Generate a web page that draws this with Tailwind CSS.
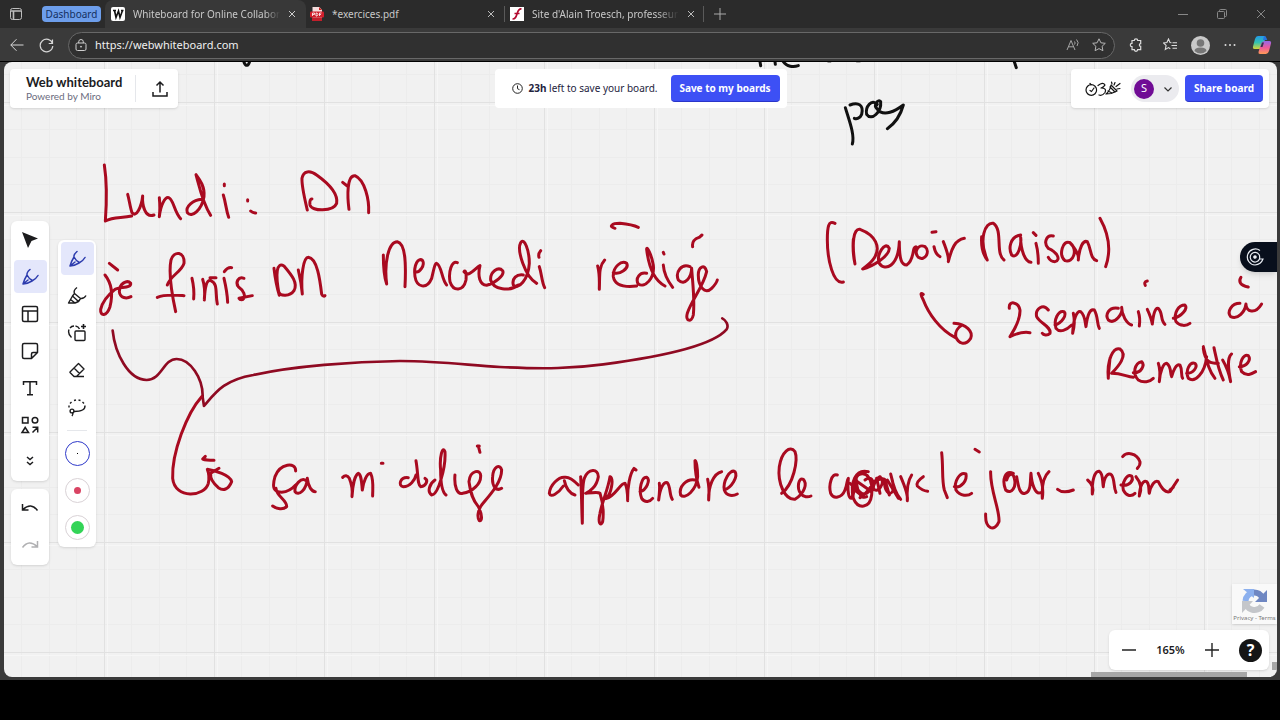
<!DOCTYPE html>
<html lang="en">
<head>
    <meta charset="UTF-8">
    <meta name="viewport" content="width=device-width, initial-scale=1.0">
    <title>Whiteboard for Online Collaboration</title>
    <script src="https://cdn.jsdelivr.net/npm/@tailwindcss/browser@4"></script>
</head>
<body class="flex h-screen flex-col overflow-hidden bg-black font-['Noto_Sans',sans-serif] text-[#1c1c1e]">
    <!-- Tab strip -->
    <header class="flex h-7 shrink-0 items-center bg-[#2b2b2b] text-[10px] text-[#c8c8c8]">
        <button aria-label="Tab actions" class="ml-2.5 flex h-7 w-3 items-center">
            <svg class="h-3 w-3" viewBox="0 0 12 12" fill="none" stroke="#bdbdbd"><rect x=".5" y=".5" width="11" height="11" rx="2"/><path d="M1 3h10M3.5 3v8" stroke-width="1.6"/></svg>
        </button>
        <button class="ml-5 h-4 w-[59px] rounded bg-[#6d9eeb] text-[10px] leading-4 text-[#14305f]">Dashboard</button>
        <div class="ml-1 flex h-7 w-[201px] items-center rounded-t-lg bg-[#383838] pl-1.5">
            <svg class="h-3.5 w-3.5 shrink-0" viewBox="0 0 14 14"><rect width="14" height="14" rx="2" fill="#fff"/><path d="M2 3.500h3M3.500 3.500L5 10.500 7.500 4 9 10.500 11.500 3.500M10 3.500h2.500" fill="none" stroke="#111" stroke-width="1.600"/></svg>
            <a href="#" class="ml-2 w-[147px] overflow-hidden whitespace-nowrap mask-r-from-90%">Whiteboard for Online Collabora</a>
            <button aria-label="Close tab" class="ml-2"><svg class="h-2 w-2" viewBox="0 0 8 8" stroke="#ccc"><path d="M1 1l6 6M7 1L1 7"/></svg></button>
        </div>
        <div class="flex h-7 w-[198px] items-center pl-1">
            <svg class="h-3.5 w-3.5 shrink-0" viewBox="0 0 14 14"><path d="M2.500 0h7L12 3v10.500H2.500z" fill="#f4dcdc"/><path d="M9 0l3 3H9z" fill="#c22"/><rect y="4.500" width="14" height="6" rx="1" fill="#d11f2c"/><path d="M2.500 9V6h2v1.500h-2M6 6v3h1l1-1.500L7 6zM9.500 9V6h2M9.500 7.500H11" fill="none" stroke="#fff" stroke-width=".8"/><path d="M2 10.500h10V14H2z" fill="#c11f2b"/></svg>
            <a href="#" class="ml-2 w-[147px] whitespace-nowrap">*exercices.pdf</a>
            <button aria-label="Close tab" class="ml-2"><svg class="h-2 w-2" viewBox="0 0 8 8" stroke="#bbb"><path d="M1 1l6 6M7 1L1 7"/></svg></button>
        </div>
        <div class="flex h-4 w-[200px] items-center border-x border-[#5a5a5a] pl-[5px]">
            <svg class="h-3.5 w-3.5 shrink-0" viewBox="0 0 14 14"><path fill="#fff" d="M0 0h14v14H0z"/><path d="M11.500 2C8.500 1.500 8 4 7 7s-1.500 5-4.500 5M4.500 6.500h5" fill="none" stroke="#b3092f" stroke-width="1.700"/></svg>
            <a href="#" class="ml-2 w-[147px] overflow-hidden whitespace-nowrap mask-r-from-85%">Site d'Alain Troesch, professeur de</a>
            <button aria-label="Close tab" class="ml-2"><svg class="h-2 w-2" viewBox="0 0 8 8" stroke="#bbb"><path d="M1 1l6 6M7 1L1 7"/></svg></button>
        </div>
        <button aria-label="New tab" class="ml-2.5"><svg class="h-3 w-3" viewBox="0 0 12 12" stroke="#aaa"><path d="M6 0v12M0 6h12"/></svg></button>
        <div class="ml-auto flex items-center gap-[29px] pr-3.5">
            <button aria-label="Minimize"><svg class="h-2.5 w-2.5" viewBox="0 0 10 10" stroke="#888"><path d="M0 5.500h10"/></svg></button>
            <button aria-label="Restore"><svg class="h-2.5 w-2.5" viewBox="0 0 10 10" fill="none" stroke="#888"><rect x=".5" y="2.500" width="7" height="7" rx="1"/><path d="M2.500 2.500V1.500a1 1 0 011-1h5a1 1 0 011 1v5a1 1 0 01-1 1h-1"/></svg></button>
            <button aria-label="Close"><svg class="h-2.5 w-2.5" viewBox="0 0 10 10" stroke="#888"><path d="M1 1l8 8M9 1L1 9"/></svg></button>
        </div>
    </header>

    <!-- Address bar -->
    <nav class="flex h-[34px] shrink-0 items-center border-b border-black bg-[#3a3a3a] pt-px">
        <button aria-label="Back" class="ml-2.5"><svg class="h-3.5 w-3.5" viewBox="0 0 14 14" fill="none" stroke="#d6d6d6"><path d="M13.500 7H.8M6.500 1.200L.8 7l5.700 5.800"/></svg></button>
        <button aria-label="Refresh" class="ml-[15px]"><svg class="h-[15px] w-[15px]" viewBox="0 0 15 15" fill="none" stroke="#d6d6d6" stroke-width="1.200"><path d="M13.500 5.500A6.300 6.300 0 1013.800 8M13.500 1.500v4H9.700"/></svg></button>
        <div class="ml-3.5 flex h-[27px] flex-1 items-center rounded-full border border-[#686868] bg-[#303030] pr-2 pl-1.5">
            <svg class="h-3 w-3" viewBox="0 0 12 12" fill="none" stroke="#cfcfcf"><rect x="1" y="4" width="10" height="7.500" rx="1.500"/><path d="M3.700 4V2.800a2.300 2.300 0 014.600 0V4"/><circle cx="6" cy="7.700" r=".5" fill="#cfcfcf"/></svg>
            <input aria-label="Address" value="https://webwhiteboard.com" class="ml-2 min-w-0 flex-1 bg-transparent text-[11px] text-[#efefef] outline-none">
            <button aria-label="Read aloud"><svg class="h-3.5 w-3.5" viewBox="0 0 14 14" fill="none" stroke="#a5a5a5"><path d="M1 12L5 2.500 9 12M2.500 8.800h5M8.500 3.500q1.300 1.500 0 3M10.500 1.500q3 3 .5 6.500"/></svg></button>
            <button aria-label="Add to favorites" class="ml-3"><svg class="h-3.5 w-3.5" viewBox="0 0 14 14" fill="none" stroke="#b5b5b5"><path d="M7 .8l1.900 4 4.400.5-3.200 3 .8 4.400L7 10.600l-3.900 2.100.8-4.400-3.200-3 4.400-.5z" stroke-linejoin="round"/></svg></button>
        </div>
        <div class="mr-2 ml-3.5 flex items-center">
            <button aria-label="Extensions"><svg class="h-3.5 w-3.5" viewBox="0 0 14 14" fill="none" stroke="#ddd" stroke-width="1.200"><path d="M3 2.500h2.300a1.700 1.700 0 013.400 0h3v3.200a1.300 1.300 0 000 2.700v3.200H8.700a1.700 1.700 0 01-3.400 0H3V8.700a1.700 1.700 0 010-3.400z"/></svg></button>
            <button aria-label="Favorites" class="ml-5"><svg class="h-3.5 w-3.5" viewBox="0 0 14 14" fill="none" stroke="#ddd" stroke-width="1.100"><path d="M8.500 4.700L7 4.500 5.500 1 3.900 4.500.6 5l2.500 2.400-.8 4L5.500 9.600l1.800 1.200M9.500 4.700H14M8.500 7.500H14M9.500 10.300H14"/></svg></button>
            <button aria-label="Profile" class="ml-3.5"><svg class="h-[19px] w-[19px]" viewBox="0 0 19 19"><circle cx="9.500" cy="9.500" r="9.500" fill="#c9c9c9"/><circle cx="9.500" cy="7" r="3.800" fill="#777"/><path d="M3.500 15q0-3.500 6-3.500t6 3.500q-6 5-12 0" fill="#777"/></svg></button>
            <button aria-label="Settings and more" class="ml-3.5"><svg class="h-3 w-3" viewBox="0 0 12 12" fill="#ddd"><circle cx="1.500" cy="6" r="1"/><circle cx="6" cy="6" r="1"/><circle cx="10.500" cy="6" r="1"/></svg></button>
            <button aria-label="Copilot" class="ml-4"><svg class="h-5 w-5" viewBox="0 0 20 20"><defs><linearGradient id="ca" x1="0" y1="0" x2="0" y2="1"><stop stop-color="#2499e8"/><stop offset=".5" stop-color="#33c1b0"/><stop offset="1" stop-color="#d5d53a"/></linearGradient><linearGradient id="cb" x1="0" y1="0" x2="0" y2="1"><stop stop-color="#9568e8"/><stop offset=".5" stop-color="#ed5a9c"/><stop offset="1" stop-color="#ff9a55"/></linearGradient></defs><path d="M6 1h6q2 0 1.500 2L11 11q-1 3-4 3H2.500Q.5 14 1 11.500L3 4q.8-3 3-3" fill="url(#ca)"/><path d="M12 1q2 0 2.500 2l.7 2H11z" fill="#2672df"/><path d="M14 19H8q-2 0-1.500-2L9 9q1-3 4-3h4.500q2 0 1.500 2.500L17 16q-.8 3-3 3" fill="url(#cb)"/><path d="M10 7.500h2L10.500 12h-2z" fill="#38324c"/></svg></button>
        </div>
    </nav>

    <!-- Board -->
    <div class="flex min-h-0 flex-1 bg-[#3a3a3a] pr-[3px] pb-[3px] pl-1">
        <main class="relative flex-1 overflow-hidden rounded-lg bg-[#f1f1f1]">
            <svg class="absolute inset-0 h-full w-full" role="img" aria-label="Handwritten notes: Lundi : DM, je finis DM Mercredi rédigé (Devoir Maison), 2 semaines à remettre, ça m'oblige à apprendre le cours le jour-même">
                <defs>
                    <pattern id="grid" x="100" y="40" width="110" height="110" patternUnits="userSpaceOnUse">
                        <path d="M27.500 0v110M55.500 0v110M82.500 0v110M0 27.500h110M0 55.500h110M0 82.500h110" stroke="#ececec"/>
                        <path d="M3.500 0v110M0 3.500h110" stroke="#f6f6f6"/>
                        <path d="M.5 0v110M0 .5h110" stroke="#e1e1e1"/>
                    </pattern>
                </defs>
                <rect width="100%" height="100%" fill="url(#grid)"/>

                <g transform="translate(-4 -62)" fill="none" stroke-linecap="round" stroke-linejoin="round">
                    <!-- black ink -->
                    <g transform="translate(750 55) scale(.3333)" stroke="#111" stroke-width="9">
                        <path d="M286 158C297 195 315 240 307 267M300 150C325 140 342 150 335 178C330 190 320 193 313 190M382 148C365 130 345 155 350 178C365 200 395 170 392 140C385 130 370 150 380 160C400 190 440 165 460 150C452 180 435 205 412 221"/>
                        <path d="M30 20L32 32M75 20L76 28M100 20C110 35 130 37 145 32M793 20L799 38M-1518 22C-1512 36 -1505 32 -1502 22"/>
                        <path d="M234 22h8M320 21h10" stroke="#999" stroke-width="4"/>
                    </g>

                    <g stroke="#a90a20" stroke-width="9">
                        <!-- lundi : DM / je finis DM -->
                        <g transform="translate(90 150) scale(.3333)">
                            <path d="M43 45C50 90 50 160 46 213C70 200 95 205 125 198"/>
                            <path d="M113 133C118 150 120 170 126 188C138 205 155 170 158 138C156 165 165 205 192 195"/>
                            <path d="M208 143C210 165 210 185 208 200C212 165 225 140 236 143C252 150 252 185 272 206"/>
                            <path d="M335 148C310 150 285 170 292 188C305 205 335 180 342 140C345 110 330 90 318 74C328 110 338 160 362 196"/>
                            <path d="M403 102v5M400 135C408 160 408 180 416 202M473 149v4M482 183C487 188 490 188 497 189"/>
                            <path d="M652 180C645 150 635 110 636 85C640 62 660 60 680 75C715 100 745 130 740 160C730 185 665 185 660 165C658 152 662 146 666 147"/>
                            <path d="M758 97L772 108M777 178C772 140 770 75 795 77C825 90 838 150 836 188"/>
                            <path d="M58 340L83 360M45 375C65 400 70 430 60 470C50 500 30 500 32 478C38 450 60 430 75 418C90 410 125 415 122 400C112 388 88 400 88 425C90 445 110 447 123 440"/>
                            <path d="M232 405C240 378 275 365 282 340C285 305 252 300 243 330C235 370 245 430 257 485M202 442C225 432 255 435 282 437"/>
                            <path d="M306 385C312 410 313 425 311 447M338 388C345 410 345 430 343 450C345 410 350 388 362 392C385 400 375 430 382 462M360 383H378"/>
                            <path d="M403 365C410 355 417 352 425 353M402 385C408 410 412 435 413 457M462 385C445 378 435 398 445 410C460 420 470 440 458 449C453 450 448 447 447 445L487 437"/>
                            <path d="M552 355C556 390 560 410 568 436C555 370 560 335 582 348C605 375 625 400 612 422C600 440 570 440 566 425"/>
                            <path d="M625 360C632 390 635 410 637 432C632 380 640 322 655 322C682 325 690 390 695 432C697 438 702 440 705 437"/>
                        </g>

                        <!-- Mercredi rédigé -->
                        <g transform="translate(370 200) scale(.3333)">
                            <path d="M40 165C40 200 42 230 50 252C42 190 55 125 82 125C108 130 108 200 105 260"/>
                            <path d="M135 215C150 220 165 195 158 182C145 170 130 195 135 230C140 262 170 270 185 235C192 205 195 190 200 190C215 195 215 240 230 255"/>
                            <path d="M262 188C245 180 235 215 240 245C250 275 280 275 288 240C290 215 285 210 282 215C295 235 315 205 330 197C322 230 330 255 350 256C375 250 405 225 398 212C385 198 360 215 362 240C370 270 420 275 445 255"/>
                            <path d="M460 225C440 222 425 235 430 255C445 270 475 240 478 190C478 150 462 110 452 128C440 150 465 230 500 250"/>
                            <path d="M512 152C505 160 505 165 507 172M508 200C515 220 515 245 524 263"/>
                            <path d="M683 198C690 225 688 245 688 268C690 230 685 200 704 180M735 85C715 80 725 70 750 70C770 72 790 75 805 82"/>
                            <path d="M730 218C750 225 778 205 770 190C755 180 728 200 730 230C735 258 765 262 800 258M830 220C810 215 795 235 805 252C825 265 855 235 850 195C845 165 830 135 830 148C835 190 850 240 885 258"/>
                            <path d="M880 157l2 5M880 195C882 225 895 245 908 262"/>
                            <path d="M960 200C935 190 915 215 925 240C945 260 965 230 965 205C968 250 975 300 970 345C965 368 945 365 952 340C965 300 1000 260 1010 215C1005 190 985 200 985 225C985 260 1005 285 1025 265C1035 255 1040 248 1042 240M968 140C965 120 980 115 988 112L996 105"/>
                        </g>

                        <!-- brace, ça m'oblige -->
                        <g transform="translate(100 310) scale(.3333)">
                            <path stroke="#8f0a22" stroke-width="8" d="M38 62C45 130 85 210 140 210C185 210 190 147 230 147C270 147 310 205 308 262L312 288C345 250 370 210 460 195C580 168 760 155 900 153C1020 153 1100 165 1200 171C1340 178 1420 175 1510 163C1700 138 1840 105 1880 58C1888 45 1877 30 1867 25"/>
                            <path d="M305 260C260 310 215 430 218 505C225 570 315 560 325 520C328 505 327 490 322 478C345 482 390 495 395 515C385 540 370 543 355 533C340 520 330 505 332 490L357 475M316 439L308 447C318 451 330 451 342 451"/>
                            <path d="M587 483C588 455 540 460 525 500C515 535 522 545 545 547C565 545 578 535 587 525M528 535C530 560 562 570 560 590C550 600 530 597 518 588"/>
                            <path d="M618 512C605 500 582 525 585 545C595 560 620 540 622 505C625 530 635 545 646 545"/>
                            <path d="M728 502C735 495 742 495 748 505C756 525 758 545 756 560C758 525 765 495 775 490C785 495 785 520 787 540C790 515 800 490 812 490C822 510 818 535 818 558M844 460h5"/>
                            <path d="M925 503C900 500 893 528 910 530C930 530 945 510 948 495M948 452C955 490 952 525 962 530C980 528 985 510 975 505"/>
                            <path d="M1005 510C990 520 980 545 995 555C1015 555 1038 470 1035 425C1028 405 1018 440 1022 480C1022 520 1025 545 1038 555M1065 495C1062 530 1072 555 1088 550C1120 545 1142 520 1142 500C1145 475 1110 480 1107 515C1112 550 1118 570 1135 590C1150 620 1145 635 1138 632C1130 620 1135 600 1145 585C1165 560 1205 520 1205 480C1200 460 1180 470 1178 500C1175 530 1190 545 1205 535"/>
                            <path d="M1132 408h6M1135 408L1140 427"/>
                        </g>

                        <!-- apprendre le -->
                        <g transform="translate(530 430) scale(.3333)">
                            <path d="M100 168C85 190 62 205 58 190C60 165 85 140 105 142C120 140 135 155 145 165M103 152C108 175 118 190 135 195"/>
                            <path d="M152 140C155 190 155 240 157 280C158 210 155 170 163 145C175 115 205 115 205 140C200 170 180 185 167 190C185 188 205 185 210 190C218 215 222 245 218 275C212 290 203 280 210 250C215 220 235 175 240 140C252 145 245 190 228 206C255 200 270 160 285 160C293 175 293 195 293 212C292 170 300 130 312 115L318 120"/>
                            <path d="M330 185C350 180 362 150 350 142C335 140 325 180 335 205C345 220 360 215 368 205M388 160C390 175 388 195 386 210C390 175 400 155 412 158C422 170 418 195 427 208"/>
                            <path d="M495 150C470 145 445 170 452 195C465 210 500 180 503 140C503 110 498 90 495 92C495 130 500 150 507 172"/>
                            <path d="M533 148C538 170 538 190 536 210C535 170 550 130 575 125M583 180C605 172 625 140 615 125C600 115 578 155 583 180C590 200 610 198 622 192"/>
                            <path d="M755 190C790 165 805 90 795 65C780 45 755 65 748 110C742 160 765 210 795 208C825 190 832 160 820 148C805 140 800 175 812 190C820 202 835 202 843 198"/>
                        </g>

                        <!-- cours le jour-même -->
                        <g transform="translate(830 430) scale(.3333)">
                            <path d="M22 135C5 128 -5 165 2 190C10 208 35 205 45 180C52 165 50 150 55 145C52 180 55 205 64 205C75 190 75 160 78 140C80 180 90 210 110 200"/>
                            <path d="M115 125C75 115 60 160 70 205C85 240 120 235 125 195C130 150 110 120 85 135C60 160 70 200 110 190C140 170 130 130 105 150M90 203C120 185 130 150 150 140C170 160 140 195 130 175C130 150 160 140 165 150C160 180 180 205 190 180C190 155 185 140 182 132C190 170 200 195 212 208"/>
                            <path d="M60 160L100 195M75 150L125 185M140 145L150 190M165 150L178 195M172 150L205 205"/>
                            <path d="M212 140C225 170 235 195 232 212C230 180 235 150 245 135M280 140C265 150 258 160 262 168C275 180 285 183 293 184"/>
                            <path d="M335 68C340 110 335 150 343 180L352 203M373 170C395 175 412 150 408 132C390 125 370 155 378 180C390 200 415 198 425 190M435 58L448 66"/>
                            <path d="M482 125C480 180 510 240 507 275C495 305 465 300 467 252M550 130C525 120 515 150 527 180C545 195 560 170 553 145C550 128 537 128 530 150"/>
                            <path d="M560 140C565 170 570 195 585 190C605 185 600 150 603 130C605 160 615 195 632 188M625 130C640 160 640 185 637 205C635 170 640 140 657 125M683 178C695 188 710 188 730 180"/>
                            <path d="M773 150C785 160 792 175 787 192C785 150 795 122 808 124C820 130 817 155 820 170C822 140 835 125 845 135C855 150 850 170 858 187"/>
                            <path d="M873 165C900 170 912 150 905 138C890 130 875 160 880 180C890 200 905 200 915 190M918 140C935 160 935 180 928 198C930 165 940 150 950 155C960 165 955 180 958 190C962 165 975 150 985 155C995 175 1005 190 1020 185L1043 150M1020 180L1030 172M878 80C890 65 920 68 930 95C932 105 925 112 922 115"/>
                        </g>

                        <!-- (Devoir Maison), 2 semaines à remettre -->
                        <g transform="translate(810 200) scale(.3333)">
                            <path d="M75 70C55 60 52 80 52 120C52 180 70 255 100 246"/>
                            <path d="M130 118C128 145 130 170 135 192C125 130 130 85 150 88C195 105 215 140 192 175C182 192 165 200 158 207C185 200 238 170 238 145C225 120 198 165 208 190C225 215 265 200 268 125C268 180 275 195 290 195C315 180 305 140 318 140M345 140C325 130 310 155 325 172C345 185 362 155 345 140"/>
                            <path d="M366 97L378 95M372 140C375 155 378 165 390 170M400 125C410 150 418 170 415 185C425 145 435 120 463 115"/>
                            <path d="M515 110C513 140 520 165 532 180C505 120 525 65 550 70C580 90 555 160 582 180M632 105C600 110 595 145 605 165C625 180 635 130 632 112C632 150 645 185 663 187"/>
                            <path d="M670 98l8 8M678 130C685 155 685 175 685 190M730 108C708 103 700 130 715 145C740 155 755 180 735 185C725 185 718 178 715 172"/>
                            <path d="M780 128C758 118 745 165 765 182C790 190 805 150 780 128C800 150 808 165 805 180C808 140 820 120 832 125C845 150 840 175 860 182M870 55C895 100 905 150 887 200"/>
                            <path d="M340 283C330 275 332 285 340 300C355 340 390 390 435 412M432 370C470 372 490 395 482 415C465 440 445 430 437 410C435 395 445 382 455 376"/>
                            <path d="M598 325C595 300 625 305 630 330C632 365 605 400 600 410C620 400 640 395 660 398M715 330C700 310 675 325 680 350C690 370 725 380 720 400C712 408 700 405 697 400"/>
                            <path d="M735 375C755 370 772 345 762 335C745 330 730 360 738 385C750 400 770 390 785 375M790 340C795 360 792 385 788 400C790 360 800 330 812 335C825 345 825 365 828 380C832 345 840 325 853 330C865 350 860 370 868 385"/>
                            <path d="M925 325C895 320 885 345 895 360C915 375 940 340 935 322C935 345 950 370 965 375M985 335C990 350 990 365 988 378M1012 243C1003 245 1003 250 1006 256"/>
                            <path d="M1012 328C1020 345 1025 360 1027 372C1030 345 1035 322 1045 325C1060 340 1050 360 1065 373M1090 355C1115 350 1135 325 1125 315C1105 315 1090 340 1098 365C1110 380 1130 378 1140 370"/>
                            <path d="M1293 232C1285 245 1290 255 1315 261M1290 310C1265 310 1250 335 1262 350C1285 360 1305 335 1308 312C1308 335 1335 345 1355 312"/>
                            <path d="M900 475C898 500 895 520 895 535C890 480 910 440 930 447C955 465 925 500 905 520C935 520 950 530 970 532M970 518C995 520 1005 495 995 485C975 490 965 520 985 540C1000 550 1020 545 1030 535"/>
                            <path d="M1045 490C1052 510 1050 530 1048 545C1050 515 1060 490 1070 490C1085 500 1080 520 1085 530C1090 510 1100 490 1110 495C1118 510 1112 525 1118 535"/>
                            <path d="M1130 520C1150 520 1165 500 1155 490C1140 485 1125 510 1135 535C1155 550 1185 520 1190 470M1180 440C1190 480 1195 510 1215 535M1212 443C1220 480 1225 510 1240 540M1180 445C1185 490 1205 490 1225 490"/>
                            <path d="M1238 480C1250 500 1258 525 1262 545C1255 510 1250 475 1265 462M1288 500C1310 500 1325 480 1315 467C1300 460 1285 490 1295 515C1310 530 1325 522 1337 515"/>
                        </g>
                    </g>
                </g>
            </svg>

            <!-- Top left -->
            <div class="absolute top-[7px] left-1.5 flex h-[39px] items-center rounded bg-white pr-2 pl-4 shadow-sm">
                <div class="w-[110px] border-r border-gray-200">
                    <h1 class="font-['Lato',sans-serif] text-[13px] leading-[15px] font-bold">Web whiteboard</h1>
                    <p class="font-['Lato',sans-serif] text-[10px] leading-3 text-[#6b6c7e]">Powered by Miro</p>
                </div>
                <button aria-label="Export" class="ml-3.5"><svg class="h-5 w-5" viewBox="0 0 20 20" fill="none" stroke="#1c1c1e" stroke-width="1.500"><path d="M3 13v4h14v-4M10 13.500V3.500M6.500 6.500L10 3l3.500 3.500"/></svg></button>
            </div>

            <!-- Save notice -->
            <div class="absolute top-[7px] left-1/2 flex h-[39px] w-[292px] -translate-x-1/2 items-center rounded bg-white px-[7px] text-[10px] whitespace-nowrap text-[#23233d]">
                <svg class="ml-2.5 h-[11px] w-[11px]" viewBox="0 0 11 11" fill="none" stroke="#222"><circle cx="5.500" cy="5.500" r="4.800"/><path d="M5.500 2.500v3.200l2 1"/></svg>
                <p class="ml-1.5"><b>23h</b> left to save your board.</p>
                <button class="ml-auto h-[27px] w-[109px] rounded-sm border-b border-[#2a35c9] bg-[#3d50f5] font-bold text-white">Save to my boards</button>
            </div>

            <!-- Top right -->
            <div class="absolute top-[7px] right-2 flex h-[39px] w-[198px] items-center rounded bg-white pr-1.5 pl-3.5 shadow-sm">
                <svg class="h-4 w-9" viewBox="0 0 36 16" fill="none" stroke="#151515" stroke-width="1.200" stroke-linecap="round" stroke-linejoin="round"><circle cx="6.300" cy="9" r="5.300"/><path d="M5 9.500l1.500 1L9 7M6 3.700L5 2.500M13 4.500q5-4 7-.5-1 2-4 3 6 0 4 4.500-3 4-6 2.500M21 13q4-3 5-9l6 6q-5 3-11 3M23 10l4 2M25 6l5 5M29 4l1-2.500M31 5.500l4-3M32 8l3-.5M27 3l-.5-2"/></svg>
                <button aria-label="Account" class="ml-2.5 flex h-[27px] w-12 items-center rounded-full bg-[#ebebef] pl-[3px]">
                    <span class="flex h-5 w-5 items-center justify-center rounded-full bg-[#700c95] text-[11px] text-white">S</span>
                    <svg class="ml-2.5 h-2 w-2" viewBox="0 0 8 8" fill="none" stroke="#333" stroke-width="1.200"><path d="M.5 2.500L4 6l3.500-3.500"/></svg>
                </button>
                <button class="ml-auto h-[27px] w-[78px] rounded-sm border-b border-[#2a35c9] bg-[#3d50f5] text-[10px] font-bold text-white">Share board</button>
            </div>

            <!-- Main toolbar -->
            <div class="absolute top-[159px] left-[7px] flex w-[38px] flex-col gap-2">
                <div class="flex h-[260px] flex-col items-center gap-1 rounded-md bg-white pt-0.5 shadow-sm">
                    <button aria-label="Select" class="flex h-[33px] w-[33px] items-center justify-center"><svg class="h-5 w-5" viewBox="0 0 20 20"><path d="M2 2l16 6.500-6.500 2.500L8 18z" fill="#1c1c1e"/></svg></button>
                    <button aria-label="Pen" class="flex h-[33px] w-[33px] items-center justify-center rounded bg-[#e4e7fb]"><svg class="h-5 w-5" viewBox="0 0 20 20" fill="none" stroke="#2d3cae" stroke-width="1.500" stroke-linecap="round" stroke-linejoin="round"><path d="M10 2.500Q6.500 5.500 7 8Q4.500 12 3 17Q8 16.500 12 14Q16 12 18 8.500M7 8Q9 12 12.500 13.500M3 17l5-4"/></svg></button>
                    <button aria-label="Templates" class="flex h-[33px] w-[33px] items-center justify-center"><svg class="h-5 w-5" viewBox="0 0 20 20" fill="none" stroke="#1c1c1e" stroke-width="1.500"><rect x="2.500" y="2.500" width="15" height="15" rx="1.500"/><path d="M2.500 7h15M8 7v10.500"/></svg></button>
                    <button aria-label="Sticky note" class="flex h-[33px] w-[33px] items-center justify-center"><svg class="h-5 w-5" viewBox="0 0 20 20" fill="none" stroke="#1c1c1e" stroke-width="1.500" stroke-linejoin="round"><path d="M4 2.500h12a1.500 1.500 0 011.500 1.500v7.500l-6 6H4A1.500 1.500 0 012.500 16V4A1.500 1.500 0 014 2.500zM17.500 11.500H13a1.500 1.500 0 00-1.500 1.500v4.500"/></svg></button>
                    <button aria-label="Text" class="flex h-[33px] w-[33px] items-center justify-center"><svg class="h-5 w-5" viewBox="0 0 20 20" fill="none" stroke="#1c1c1e" stroke-width="1.500"><path d="M3.500 7V3.700h13V7M10 3.700v13M7 16.700h6"/></svg></button>
                    <button aria-label="Shapes" class="flex h-[33px] w-[33px] items-center justify-center"><svg class="h-5 w-5" viewBox="0 0 20 20" fill="none" stroke="#1c1c1e" stroke-width="1.500"><path d="M2.500 2.500h5.500V8H2.500zM5.200 12.500l3.300 5H2zM12.500 17.500l5-5M12.500 12.300h5.200v5.200"/><circle cx="15" cy="5.200" r="2.800"/></svg></button>
                    <button aria-label="More tools" class="flex h-[33px] w-[33px] items-center justify-center"><svg class="h-5 w-5" viewBox="0 0 20 20" fill="none" stroke="#1c1c1e" stroke-width="1.500"><path d="M7 5l3 2.500L13 5M7 10l3 2.500 3-2.500"/></svg></button>
                </div>
                <div class="flex h-[76px] flex-col items-center gap-1 rounded-md bg-white pt-0.5 shadow-sm">
                    <button aria-label="Undo" class="flex h-[33px] w-[33px] items-center justify-center"><svg class="h-5 w-5" viewBox="0 0 20 20" fill="none" stroke="#1c1c1e" stroke-width="1.500"><path d="M2.500 6v6h6M3 11.500Q11 4 17.500 12.500"/></svg></button>
                    <button aria-label="Redo" class="flex h-[33px] w-[33px] items-center justify-center"><svg class="h-5 w-5" viewBox="0 0 20 20" fill="none" stroke="#b0b0b2" stroke-width="1.500"><path d="M17.500 6v6h-6M17 11.500Q9 4 2.500 12.500"/></svg></button>
                </div>
            </div>

            <!-- Pen toolbar -->
            <div class="absolute top-[178px] left-[54px] flex h-[307px] w-[38px] flex-col items-center gap-1 rounded-md bg-white pt-0.5 shadow-sm">
                <button aria-label="Pen" class="flex h-[33px] w-[33px] items-center justify-center rounded bg-[#e4e7fb]"><svg class="h-5 w-5" viewBox="0 0 20 20" fill="none" stroke="#2d3cae" stroke-width="1.500" stroke-linecap="round" stroke-linejoin="round"><path d="M10 2.500Q6.500 5.500 7 8Q4.500 12 3 17Q8 16.500 12 14Q16 12 18 8.500M7 8Q9 12 12.500 13.500M3 17l5-4"/></svg></button>
                <button aria-label="Highlighter" class="flex h-[33px] w-[33px] items-center justify-center"><svg class="h-5 w-5" viewBox="0 0 20 20" fill="none" stroke="#1c1c1e" stroke-width="1.400" stroke-linejoin="round"><path d="M10 1.500Q6 4.500 7.500 7.500l6 5Q17 13 19 9.500M7.500 7.500L5.500 10l6 5.500 2-3M5.500 10L1.500 17H8l3.500-1.500M3.500 13.500L8 17"/></svg></button>
                <button aria-label="Smart drawing" class="flex h-[33px] w-[33px] items-center justify-center"><svg class="h-5 w-5" viewBox="0 0 20 20" fill="none" stroke="#1c1c1e" stroke-width="1.400"><rect x="8" y="8" width="10" height="9.500" rx="1"/><path d="M4.500 14.500Q.5 11 2 6.500M3 5Q4.500 3 7 3M8.500 3Q11.500 3.500 12.500 6"/><path d="M16.500 1v5M14 3.500h5" stroke-width="1.600"/></svg></button>
                <button aria-label="Eraser" class="flex h-[33px] w-[33px] items-center justify-center"><svg class="h-5 w-5" viewBox="0 0 20 20" fill="none" stroke="#1c1c1e" stroke-width="1.400" stroke-linejoin="round"><path d="M11.500 3.500l5.500 5.500-7.500 7.500H7L3 12.500V12zM7 8l5.500 5.500M9.500 16.500H17"/></svg></button>
                <button aria-label="Lasso" class="flex h-[33px] w-[33px] items-center justify-center"><svg class="h-5 w-5" viewBox="0 0 20 20" fill="none" stroke="#1c1c1e" stroke-width="1.400"><path d="M2 10.500V8.500M3 6.500L4.500 5M7 3.500L9 3M11.500 3l2 .5M15.500 5l1.500 1.500M18 8.500Q18.500 14.500 7 14.500M5.500 15.500Q6.500 17 5 19"/><circle cx="5" cy="14" r="1.900"/></svg></button>
                <hr class="mt-[3px] w-5 border-gray-200">
                <button aria-label="Black, thin" class="mt-1.5 flex h-[25px] w-[25px] shrink-0 items-center justify-center rounded-full border border-[#2f3aca]"><span class="h-px w-px bg-black"></span></button>
                <button aria-label="Red, medium" class="mt-2 flex h-[25px] w-[25px] shrink-0 items-center justify-center rounded-full border border-[#d9d2d6]"><span class="h-[7px] w-[7px] rounded-full bg-[#d94463]"></span></button>
                <button aria-label="Green, thick" class="mt-2 flex h-[25px] w-[25px] shrink-0 items-center justify-center rounded-full border border-[#d9d2d6]"><span class="h-[13px] w-[13px] rounded-full bg-[#33d457]"></span></button>
            </div>

            <!-- Side handle -->
            <button aria-label="Open assistant" class="absolute top-[180px] right-0 flex h-[30px] w-[37px] items-center rounded-l-full bg-[#080f1c] pl-1.5 shadow-md">
                <svg class="h-[18px] w-[18px]" viewBox="0 0 18 18" fill="none" stroke="#e8ecf2" stroke-width="1.200"><path d="M14 2.500A8 8 0 109 17q6-.5 8-6h-3.500A4.800 4.800 0 1113 6.500q1 1.500.5 4.500"/><circle cx="9" cy="9" r="1.200" fill="#fff"/></svg>
            </button>

            <!-- reCAPTCHA -->
            <div class="absolute right-0 bottom-[53px] flex h-10 w-[45px] flex-col items-center bg-[#f9f9f9] pt-1 shadow-sm">
                <svg class="h-[27px] w-[27px] shrink-0" viewBox="0 0 27 27" fill="none" stroke-width="6"><path d="M4.500 13A9 9 0 0113 4.500" stroke="#8cb0ee"/><path d="M13 4.500A9 9 0 0121 9" stroke="#6f87c2"/><path d="M26 2v12H14z" fill="#6f87c2"/><path d="M2 1h11v9z" fill="#8cb0ee"/><path d="M4.500 13a9 9 0 0016.500 5" stroke="#c4c6ca"/><path d="M1 25V13h11z" fill="#c4c6ca"/></svg>
                <p class="text-[6px] leading-[7px] whitespace-nowrap text-[#777]"><a href="#">Privacy</a> - <a href="#">Terms</a></p>
            </div>

            <!-- Zoom controls -->
            <div class="absolute right-2 bottom-[7px] flex h-10 w-[160px] items-center rounded-md bg-white pr-[7px] pl-[13px] shadow-sm">
                <button aria-label="Zoom out"><svg class="h-3.5 w-3.5" viewBox="0 0 14 14" stroke="#222" stroke-width="1.400"><path d="M0 7h14"/></svg></button>
                <button class="w-[69px] text-center text-[11px] font-semibold">165%</button>
                <button aria-label="Zoom in"><svg class="h-3.5 w-3.5" viewBox="0 0 14 14" stroke="#222" stroke-width="1.400"><path d="M0 7h14M7 0v14"/></svg></button>
                <button aria-label="Help" class="ml-auto flex h-[23px] w-[23px] items-center justify-center rounded-full bg-[#151515] text-base leading-none font-bold text-white">?</button>
            </div>
            <div class="absolute right-[30px] bottom-0 h-[5px] w-[156px] bg-[#a6a6a6]"></div>
            <div class="absolute right-0 bottom-[7px] h-2 w-[5px] bg-[#a6a6a6]"></div>
        </main>
    </div>
    <div class="h-10 shrink-0 bg-black"></div>
</body>
</html>
